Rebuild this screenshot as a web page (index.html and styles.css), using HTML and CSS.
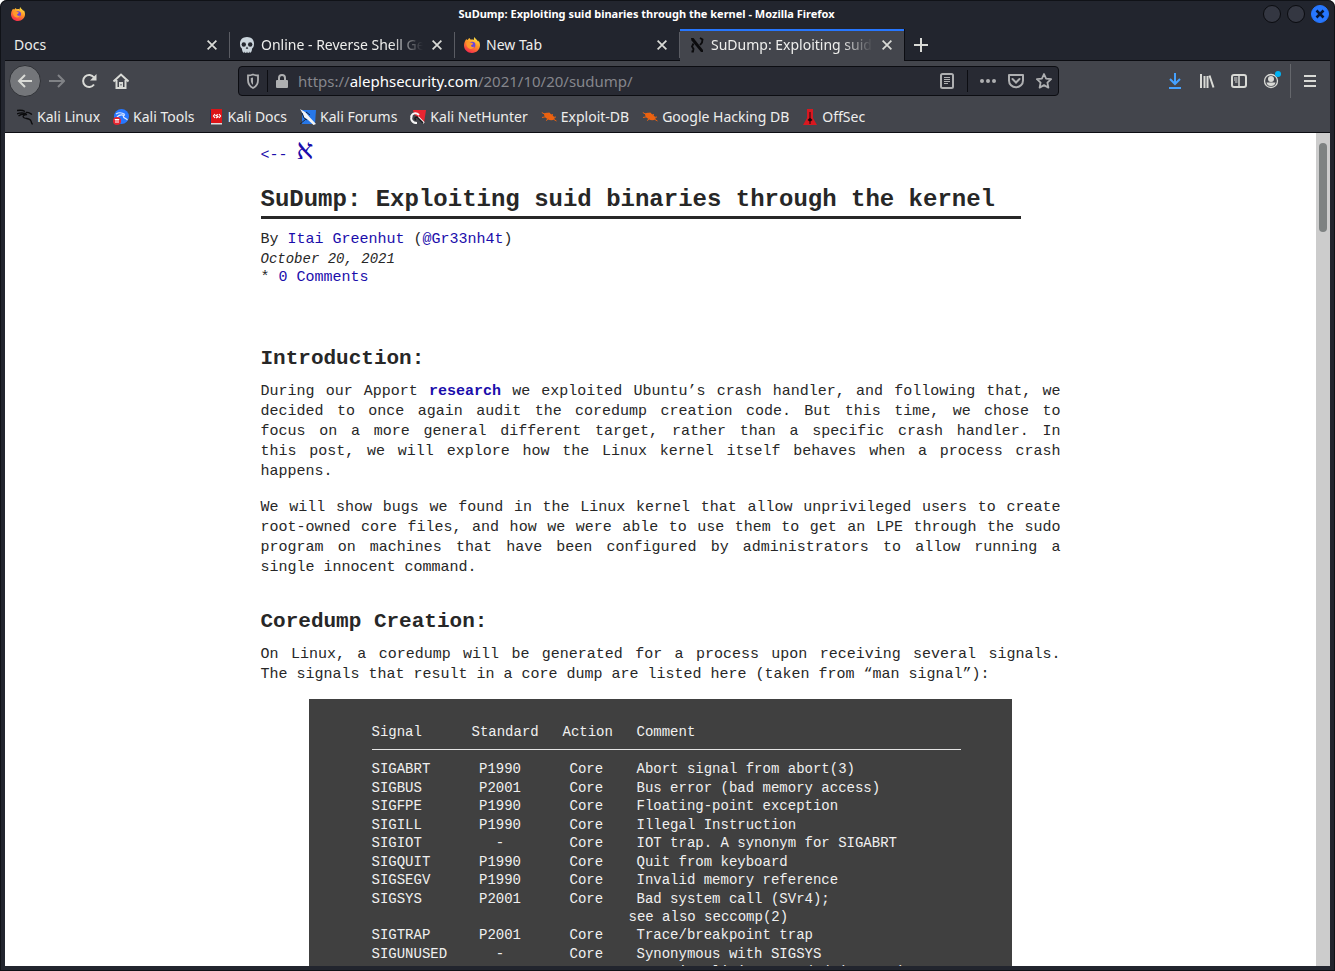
FILE: index.html
```
<!DOCTYPE html>
<html lang="en">
<head>
<meta charset="utf-8">
<title>SuDump: Exploiting suid binaries through the kernel</title>
<link rel="stylesheet" href="styles.css">
</head>
<body>
<svg class="defs" width="0" height="0" aria-hidden="true">
  <defs>
    <linearGradient id="flame" x1="0.8" y1="0" x2="0.3" y2="1"><stop offset="0" stop-color="#fff14a"/><stop offset="0.45" stop-color="#ff9626"/><stop offset="1" stop-color="#f5264e"/></linearGradient>
    <symbol id="fox" viewBox="0 0 16 16">
      <path fill="url(#flame)" d="M10.6 0c-.7 1-.9 2-.6 2.900C9 2.300 7.600 2.300 6.800 2.700 6 2.100 5.700 1.500 5.600 1 4.700 1.500 4.200 2.100 3.800 2.900c-.7 0-1.200-.2-1.500-.9C1 3.800 0 6 0 8.500 0 12.700 3.600 16 8 16s8-3.300 8-7.700c0-2-.7-3.700-1.600-4.800 0 .6 0 1-.2 1.300C13.400 2.700 11 2 10.600 0z"/>
      <circle cx="8.200" cy="8" r="3.200" fill="#6a45dc"/>
      <path fill="#ff9a2b" d="M2.500 5.500c1.500-1 3.500-.6 4.600.3 1 .1 1.900.3 1.900.9 0 .8-1.600 1-2 1.800 0 1.300 1.600 2.100 3.400 1.100-.8 2-2.800 2.900-4.800 2.200-2.700-.9-3.700-3.700-3.100-6.300z"/>
    </symbol>
    <symbol id="close" viewBox="0 0 16 16"><path d="M3 3l10 10M13 3L3 13" fill="none" stroke="currentColor" stroke-width="2"/></symbol>
    <symbol id="bug" viewBox="0 0 16 16"><path fill="#ec6210" d="M3 4.500c2-1.300 5-.9 7 .4 2.300 1.400 3.800 3.300 3.600 5.300-2 1.500-5 1.300-7-.2C4.200 9 2.700 6.500 3 4.500z"/><path d="M.8 3.500l3 1.700M1 8.500l4-.8M5 11.500l2.500-1.500M8 3.500l1 2M11.500 5l-.5 1.500M15 8l-2.500.4M15.500 12l-2.500-1.500" stroke="#ec6210"/></symbol>
  </defs>
</svg>
<div class="window">
  <header class="titlebar">
    <svg class="app-icon" width="14" height="14"><use href="#fox"/></svg>
    <span class="window-title">SuDump: Exploiting suid binaries through the kernel - Mozilla Firefox</span>
    <div class="controls">
      <button class="control" aria-label="Minimize"></button>
      <button class="control" aria-label="Maximize"></button>
      <button class="control control-close" aria-label="Close window"><svg width="12" height="12" viewBox="0 0 12 12"><path d="M2.500 2.500l7 7M9.500 2.500l-7 7" stroke="#07142e" stroke-width="2.500"/></svg></button>
    </div>
  </header>

  <nav class="tabs" aria-label="Tabs">
    <div class="tab"><span class="tab-label">Docs</span><button class="tab-close" aria-label="Close Docs"><svg width="14" height="14"><use href="#close"/></svg></button></div>
    <div class="tab">
      <svg width="16" height="16" viewBox="0 0 16 16"><path fill="#ccd6dd" d="M8 0C3.600 0 1 2.800 1 6.500c0 2 .3 3.700 1.400 4.600.5.400.6.900.7 1.900.2 1.500 1 2.700 2 2.900l.7-1.500.6 1.600h.9L8 14.500l.7 1.500h.9l.6-1.600.7 1.500c1-.2 1.800-1.400 2-2.900.1-1 .2-1.500.7-1.900C14.700 10.200 15 8.500 15 6.500 15 2.800 12.400 0 8 0z"/><circle cx="4.800" cy="7.500" r="2.200" fill="#252830"/><circle cx="11.200" cy="7.500" r="2.200" fill="#252830"/><path fill="#252830" d="M8 9.500l1.300 2.200H6.700z"/></svg>
      <span class="tab-label fade">Online - Reverse Shell Ge</span><button class="tab-close" aria-label="Close Online"><svg width="14" height="14"><use href="#close"/></svg></button>
    </div>
    <div class="tab"><svg width="16" height="16"><use href="#fox"/></svg><span class="tab-label">New Tab</span><button class="tab-close" aria-label="Close New Tab"><svg width="14" height="14"><use href="#close"/></svg></button></div>
    <div class="tab tab-active">
      <svg width="16" height="16" viewBox="0 0 16 16"><path d="M2 1h2.500L14 13v2h-2L2.500 3.500z" fill="#0b0b0d"/><path d="M11 1l2.500 1.500-.5 3-2 2.500M4.500 6.500L3 9.500l1.500 2.500L4 14.500H2.500" fill="none" stroke="#0b0b0d" stroke-width="1.800"/></svg>
      <span class="tab-label fade">SuDump: Exploiting suid</span><button class="tab-close" aria-label="Close SuDump"><svg width="14" height="14"><use href="#close"/></svg></button>
    </div>
    <button class="new-tab" aria-label="New tab"><svg width="14" height="14" viewBox="0 0 14 14"><path d="M7 0v14M0 7h14" stroke="currentColor" stroke-width="2"/></svg></button>
  </nav>

  <div class="toolbar">
    <button class="tool back" aria-label="Back"><svg width="16" height="16" viewBox="0 0 16 16"><path d="M15 8H2M8 2L2 8l6 6" class="line"/></svg></button>
    <button class="tool forward" aria-label="Forward"><svg width="16" height="16" viewBox="0 0 16 16"><path d="M0 8h15M9 2l6 6-6 6" class="line"/></svg></button>
    <button class="tool" aria-label="Reload"><svg width="16" height="16" viewBox="0 0 16 16"><path d="M13 11.500A6 6 0 1 1 13 4.500" class="line"/><path d="M15.500 1v6.500H9z" fill="currentColor"/></svg></button>
    <button class="tool" aria-label="Home"><svg width="16" height="16" viewBox="0 0 16 16"><path d="M0.500 8.500L8 1.500l7.500 7M3.500 7v8h9V7" class="line"/><path fill-rule="evenodd" d="M6 9h4v6H6zM7.500 11v1.500h1V11z" fill="currentColor"/></svg></button>
    <div class="urlbar">
      <svg width="16" height="16" viewBox="0 0 16 16"><path d="M8 1.500c2 .8 3.500 1 5 1V7c0 4-2 6.500-5 8-3-1.500-5-4-5-8V2.500c1.500 0 3-.2 5-1z" fill="none" stroke="currentColor" stroke-width="1.800"/><path d="M8 4.500v7.300C6.500 10.800 5.800 9 5.800 7V5z" fill="currentColor"/></svg>
      <span class="url-sep"></span>
      <svg width="16" height="16" viewBox="0 0 16 16"><path d="M5 8V5a3 3 0 0 1 6 0v3" fill="none" stroke="currentColor" stroke-width="2"/><rect x="2" y="7" width="12" height="8" rx="1" fill="currentColor"/></svg>
      <a class="url" href="#">https://<span class="domain">alephsecurity.com</span>/2021/10/20/sudump/</a>
      <svg width="16" height="16" viewBox="0 0 16 16"><rect x="2" y="1" width="12" height="14" rx="1.500" fill="none" stroke="currentColor" stroke-width="2"/><path d="M5 4.500h6M5 6.500h6M5 8.500h6M5 10.500h4" stroke="currentColor"/></svg>
      <span class="url-sep sep-right"></span>
      <svg width="16" height="16" viewBox="0 0 16 16"><g fill="currentColor"><circle cx="2" cy="8" r="2"/><circle cx="8" cy="8" r="2"/><circle cx="14" cy="8" r="2"/></g></svg>
      <svg class="url-icon" width="16" height="16" viewBox="0 0 16 16"><path d="M1 2h14v5.500a7 6.800 0 0 1-14 0z" fill="none" stroke="currentColor" stroke-width="2" stroke-linejoin="round"/><path d="M4.500 6L8 9.500 11.500 6" fill="none" stroke="currentColor" stroke-width="2" stroke-linecap="round"/></svg>
      <svg class="url-icon" width="16" height="16" viewBox="0 0 16 16"><path d="M8 1l2.100 4.600 5 .6-3.700 3.400 1 5L8 12.100l-4.400 2.500 1-5L.9 6.200l5-.6z" fill="none" stroke="currentColor" stroke-width="1.800" stroke-linejoin="round"/></svg>
    </div>
    <button class="tool download" aria-label="Downloads"><svg width="16" height="16" viewBox="0 0 16 16"><path d="M8 0v11M3 6l5 5 5-5M2 15h12" class="line"/></svg></button>
    <button class="tool" aria-label="Library"><svg width="16" height="16" viewBox="0 0 16 16"><path d="M2 1v14M5.500 3v12M8.500 3v12M10.500 2.500l4 12" class="line"/></svg></button>
    <button class="tool" aria-label="Sidebars"><svg width="16" height="16" viewBox="0 0 16 16"><rect x="1" y="2" width="14" height="12" rx="2" class="line"/><path d="M8 2v12" stroke="currentColor" stroke-width="1.500"/><path d="M3 5h3.500M3 7h3.500M4 9h2.500" stroke="currentColor"/></svg></button>
    <button class="tool" aria-label="Account"><svg width="20" height="20" viewBox="0 0 20 20"><circle cx="10" cy="10" r="6.500" fill="none" stroke="currentColor" stroke-width="1.300"/><circle cx="10" cy="8" r="3" fill="currentColor"/><path d="M5.500 11.500h9C14 14 12.500 15 10 15s-4-1-4.500-3.500z" fill="currentColor"/><circle cx="17" cy="3" r="3" fill="#00b3f4" /></svg></button>
    <span class="tool-sep"></span>
    <button class="tool" aria-label="Menu"><svg width="16" height="16" viewBox="0 0 16 16"><path d="M2 3h12M2 8h12M2 13h12" class="line"/></svg></button>
  </div>

  <nav class="bookmarks" aria-label="Bookmarks">
    <a href="#"><svg width="16" height="16" viewBox="0 0 16 16"><path d="M0 1.500c3-.5 6-.3 8 1M0 5c3-1.500 6-1.300 9-.5M1.500 7C4 5 7 4.500 10 5.500 6 5.500 5 8 7.500 9c2.500.8 6 .5 6.500 3 .3 1.200.5 2 1.500 3.500M9 3.500c3-.5 4 1 6 2" fill="none" stroke="#0b0b0d" stroke-width="1.300"/></svg>Kali Linux</a>
    <a href="#"><svg width="16" height="16" viewBox="0 0 16 16"><circle cx="8.500" cy="7.500" r="7.500" fill="#2777ff"/><path d="M3 5c3-2 6-1.500 9 .5M4 8c3-3 5-2.500 7-1.500-2 1.500 1 2.500 3.500 4.500" fill="none" stroke="#dfe9ff" stroke-width="1.200"/><circle cx="4" cy="12" r="4" fill="#e6232e"/><path d="M1.800 10.500h4.400M3 10.500v3.500M5 10.500v3.500" stroke="#fff"/></svg>Kali Tools</a>
    <a href="#"><svg width="16" height="16" viewBox="0 0 16 16"><path fill="#1d3763" d="M2 1h2v14H2z"/><path fill="#dc1418" d="M3 0h11v14H3z"/><path fill="#ddd" d="M3 14h11v1.500H3z"/><path d="M7 5L5.500 7 7 9M11 5l1.500 2L11 9M10 5.500L8 6.500l2 1.200-2 1.300" fill="none" stroke="#fff" stroke-width="1.200"/></svg>Kali Docs</a>
    <a href="#"><svg width="16" height="16" viewBox="0 0 16 16"><path fill="#2777e8" d="M2 1h14l-1 14H2z"/><path d="M0 0l5 3 2 2 2.500 3L16 15l-2.500 1L7 10 4 8.500 3 5z" fill="#f4f4f4"/><path d="M2 4l2 5 3 2M0 15l6-5M6 3l4 3" stroke="#14253d" fill="none"/></svg>Kali Forums</a>
    <a href="#"><svg width="16" height="16" viewBox="0 0 16 16"><path fill="#e92531" d="M3 1h13l-2 13L4 5z"/><path d="M14 14L8 8M1 8c1-4 5-5 8-2M7 14C2 14 0 10 2 7" stroke="#f4f4f4" stroke-width="2" fill="none"/><path d="M6 11c-2-1-1-3 1-3l6 6" stroke="#17181c" stroke-width="1.500" fill="none"/></svg>Kali NetHunter</a>
    <a href="#"><svg width="16" height="16"><use href="#bug"/></svg>Exploit-DB</a>
    <a href="#"><svg width="16" height="16"><use href="#bug"/></svg>Google Hacking DB</a>
    <a href="#"><svg width="16" height="16" viewBox="0 0 16 16"><path fill="#d81820" d="M5 0h6v9l4 7H1l4-7z"/><path fill="#16080a" d="M7.500 3h1v6l2 2-2 1.500V15h-1v-2.500l-2-1.500 2-2z"/></svg>OffSec</a>
  </nav>

  <div class="viewport">
    <main class="page">
      <p class="home"><a href="#">&lt;-- <span class="aleph">א</span></a></p>
      <h1>SuDump: Exploiting suid binaries through the kernel</h1>
      <p class="byline">By <a href="#">Itai Greenhut</a> (<a href="#">@Gr33nh4t</a>)</p>
      <p class="date">October 20, 2021</p>
      <p class="comments">* <a href="#">0 Comments</a></p>

      <h2>Introduction:</h2>
      <p class="text">
        <span>During our Apport <a href="#"><strong>research</strong></a> we exploited Ubuntu’s crash handler, and following that, we</span>
        <span>decided to once again audit the coredump creation code. But this time, we chose to</span>
        <span>focus on a more general different target, rather than a specific crash handler. In</span>
        <span>this post, we will explore how the Linux kernel itself behaves when a process crash</span>
        <span>happens.</span>
      </p>
      <p class="text">
        <span>We will show bugs we found in the Linux kernel that allow unprivileged users to create</span>
        <span>root-owned core files, and how we were able to use them to get an LPE through the sudo</span>
        <span>program on machines that have been configured by administrators to allow running a</span>
        <span>single innocent command.</span>
      </p>

      <h2>Coredump Creation:</h2>
      <p class="text">
        <span>On Linux, a coredump will be generated for a process upon receiving several signals.</span>
        <span>The signals that result in a core dump are listed here (taken from “man signal”):</span>
      </p>

      <div class="listing">
        <table>
          <colgroup><col class="c-signal"><col class="c-standard"><col class="c-action"><col></colgroup>
          <thead><tr><th>Signal</th><th>Standard</th><th>Action</th><th>Comment</th></tr></thead>
          <tbody>
            <tr><td>SIGABRT</td><td>P1990</td><td>Core</td><td>Abort signal from abort(3)</td></tr>
            <tr><td>SIGBUS</td><td>P2001</td><td>Core</td><td>Bus error (bad memory access)</td></tr>
            <tr><td>SIGFPE</td><td>P1990</td><td>Core</td><td>Floating-point exception</td></tr>
            <tr><td>SIGILL</td><td>P1990</td><td>Core</td><td>Illegal Instruction</td></tr>
            <tr><td>SIGIOT</td><td>-</td><td>Core</td><td>IOT trap. A synonym for SIGABRT</td></tr>
            <tr><td>SIGQUIT</td><td>P1990</td><td>Core</td><td>Quit from keyboard</td></tr>
            <tr><td>SIGSEGV</td><td>P1990</td><td>Core</td><td>Invalid memory reference</td></tr>
            <tr><td>SIGSYS</td><td>P2001</td><td>Core</td><td>Bad system call (SVr4);<span class="outdent">see also seccomp(2)</span></td></tr>
            <tr><td>SIGTRAP</td><td>P2001</td><td>Core</td><td>Trace/breakpoint trap</td></tr>
            <tr><td>SIGUNUSED</td><td>-</td><td>Core</td><td>Synonymous with SIGSYS</td></tr>
            <tr class="last"><td></td><td></td><td></td><td>CPU time limit exceeded (4.2BSD);</td></tr>
          </tbody>
        </table>
      </div>
    </main>
    <div class="scrollbar"><div class="thumb"></div></div>
  </div>
</div>
</body>
</html>
```
FILE: styles.css
```
* { box-sizing: border-box; }
body { margin: 0; background: #fff; font-family: "Noto Sans", sans-serif; }
button { margin: 0; padding: 0; border: 0; background: none; color: inherit; font: inherit; }
svg { flex: none; display: block; }
a { color: inherit; text-decoration: none; }
.defs { position: absolute; }
.line { fill: none; stroke: currentColor; stroke-width: 2; }

.window {
  height: 100vh;
  display: flex;
  flex-direction: column;
  overflow: hidden;
  padding: 0 5px 5px;
  background: #22252e;
  border-radius: 7px 7px 0 0;
  box-shadow: inset 0 0 0 1px #101217;
  color: #eeeeec;
  font-size: 14px;
}

.titlebar { display: grid; grid-template-columns: 1fr auto 1fr; align-items: center; height: 29px; flex: none; padding-bottom: 2px; }
.app-icon { margin-left: 6px; }
.window-title { margin-right: 42px; font: bold 11px/16px "Noto Sans", sans-serif; color: #fff; }
.controls { display: flex; justify-content: flex-end; gap: 6px; margin-right: 1px; }
.control { width: 18px; height: 18px; border: 1px solid #0b0c10; border-radius: 50%; background: #343742; }
.control-close { display: grid; place-items: center; background: #2777ff; border-color: #2777ff; }

.tabs { display: flex; height: 32px; flex: none; border-bottom: 1px solid #0c0d12; }
.tab { flex: 0 1 225px; min-width: 0; display: flex; align-items: center; gap: 6px; padding: 0 9px 0 9px; border-right: 1px solid #5a5c63; border-image: linear-gradient(transparent 4px, #5a5c63 4px, #5a5c63 28px, transparent 28px) 1; }
.tab-label { flex: 1; min-width: 0; overflow: hidden; white-space: nowrap; line-height: 24px; }
.fade { -webkit-mask-image: linear-gradient(to left, transparent, #000 32px); mask-image: linear-gradient(to left, transparent, #000 32px); }
.tab-close { display: grid; place-items: center; width: 16px; height: 16px; color: #d9dad6; }
.tab-active { margin-bottom: -1px; border-image: none; border-right: 1px solid #0c0d12; background: #43454c; box-shadow: inset 0 2px #2777ff; }
.new-tab { margin-left: 8px; display: grid; place-items: center; width: 16px; color: #d9dad6; }

.toolbar { display: flex; align-items: center; height: 40px; flex: none; padding: 0 4px; background: #43454c; color: #d9dad6; }
.tool { flex: none; display: grid; place-items: center; width: 32px; height: 32px; }
.back { border-radius: 50%; background: #74767a; border: 1px solid #2f3136; }
.forward { color: #808286; }
.download { color: #45a1ff; }
.tool-sep { width: 1px; height: 34px; margin: 0 3px; background: #65676c; }
.urlbar { flex: 1; min-width: 0; display: flex; align-items: center; height: 30px; margin: 0 100px 0 101px; padding: 0 6px; border: 1px solid #0c0d12; border-radius: 4px; background: #282a33; color: #aeafb1; }
.url { flex: 1; min-width: 0; overflow: hidden; white-space: nowrap; margin-left: 8px; font-size: 15px; line-height: 24px; color: #85868c; }
.domain { color: #fff; }
.url-sep { width: 1px; height: 22px; margin: 0 6px; background: #0c0d12; }
.sep-right { margin: 0 12px; }
.url-icon { margin-left: 12px; }

.bookmarks { display: flex; align-items: center; gap: 13px; height: 32px; flex: none; padding: 0 12px; background: #43454c; border-bottom: 1px solid #0c0d12; white-space: nowrap; }
.bookmarks a { display: flex; align-items: center; gap: 4px; }

.viewport { flex: 1; min-height: 0; display: flex; overflow: hidden; background: #fff; }
.page { flex: 0 1 800px; margin: 0 auto; color: #272727; font-family: "Liberation Mono", monospace; font-size: 15px; line-height: 20px; }
.page a { color: #1a0dab; }
.page p { margin: 0; }
.home { height: 36px; line-height: 34px; }
.home .aleph { font-family: "Liberation Serif", serif; font-size: 28px; }
h1 { width: fit-content; margin: 15px 0 10px; padding-right: 26px; border-bottom: 3px solid #272727; font-size: 24px; line-height: 32px; }
.byline { line-height: 21px; }
.date { font-size: 14px; font-style: italic; line-height: 18px; }
h2 { margin: 28px 0 7px; font-size: 21px; line-height: 32px; }
.comments + h2 { margin-top: 55px; }
.page .text { margin-bottom: 16px; }
.text span { display: block; text-align: justify; text-align-last: justify; }
.text span:last-child { text-align-last: left; }
.page .listing { margin: -2px 49px 0 48px; padding: 24px 48px 24px 63px; background: #404040; color: #f0f0f0; font-size: 14px; line-height: 18px; }
table { width: 589px; table-layout: fixed; border-collapse: collapse; }
th, td { padding: 0; font-weight: normal; text-align: left; vertical-align: top; white-space: nowrap; }
th { padding-bottom: 8px; border-bottom: 1px solid #e4e4e4; }
tbody tr:nth-child(odd) td { padding-bottom: 1px; }
tbody tr:first-child td { padding-top: 10px; }
.c-signal { width: 100px; }
.c-standard { width: 91px; }
.c-action { width: 74px; }
td:nth-child(2) { padding-right: 34px; text-align: center; }
td:nth-child(3) { padding-left: 7px; }
.outdent { display: block; margin-left: -8px; }

.scrollbar { flex: none; width: 14px; padding: 10px 3px; background: #cccccc; }
.thumb { height: 89px; border-radius: 4px; background: #7e8282; }
```
